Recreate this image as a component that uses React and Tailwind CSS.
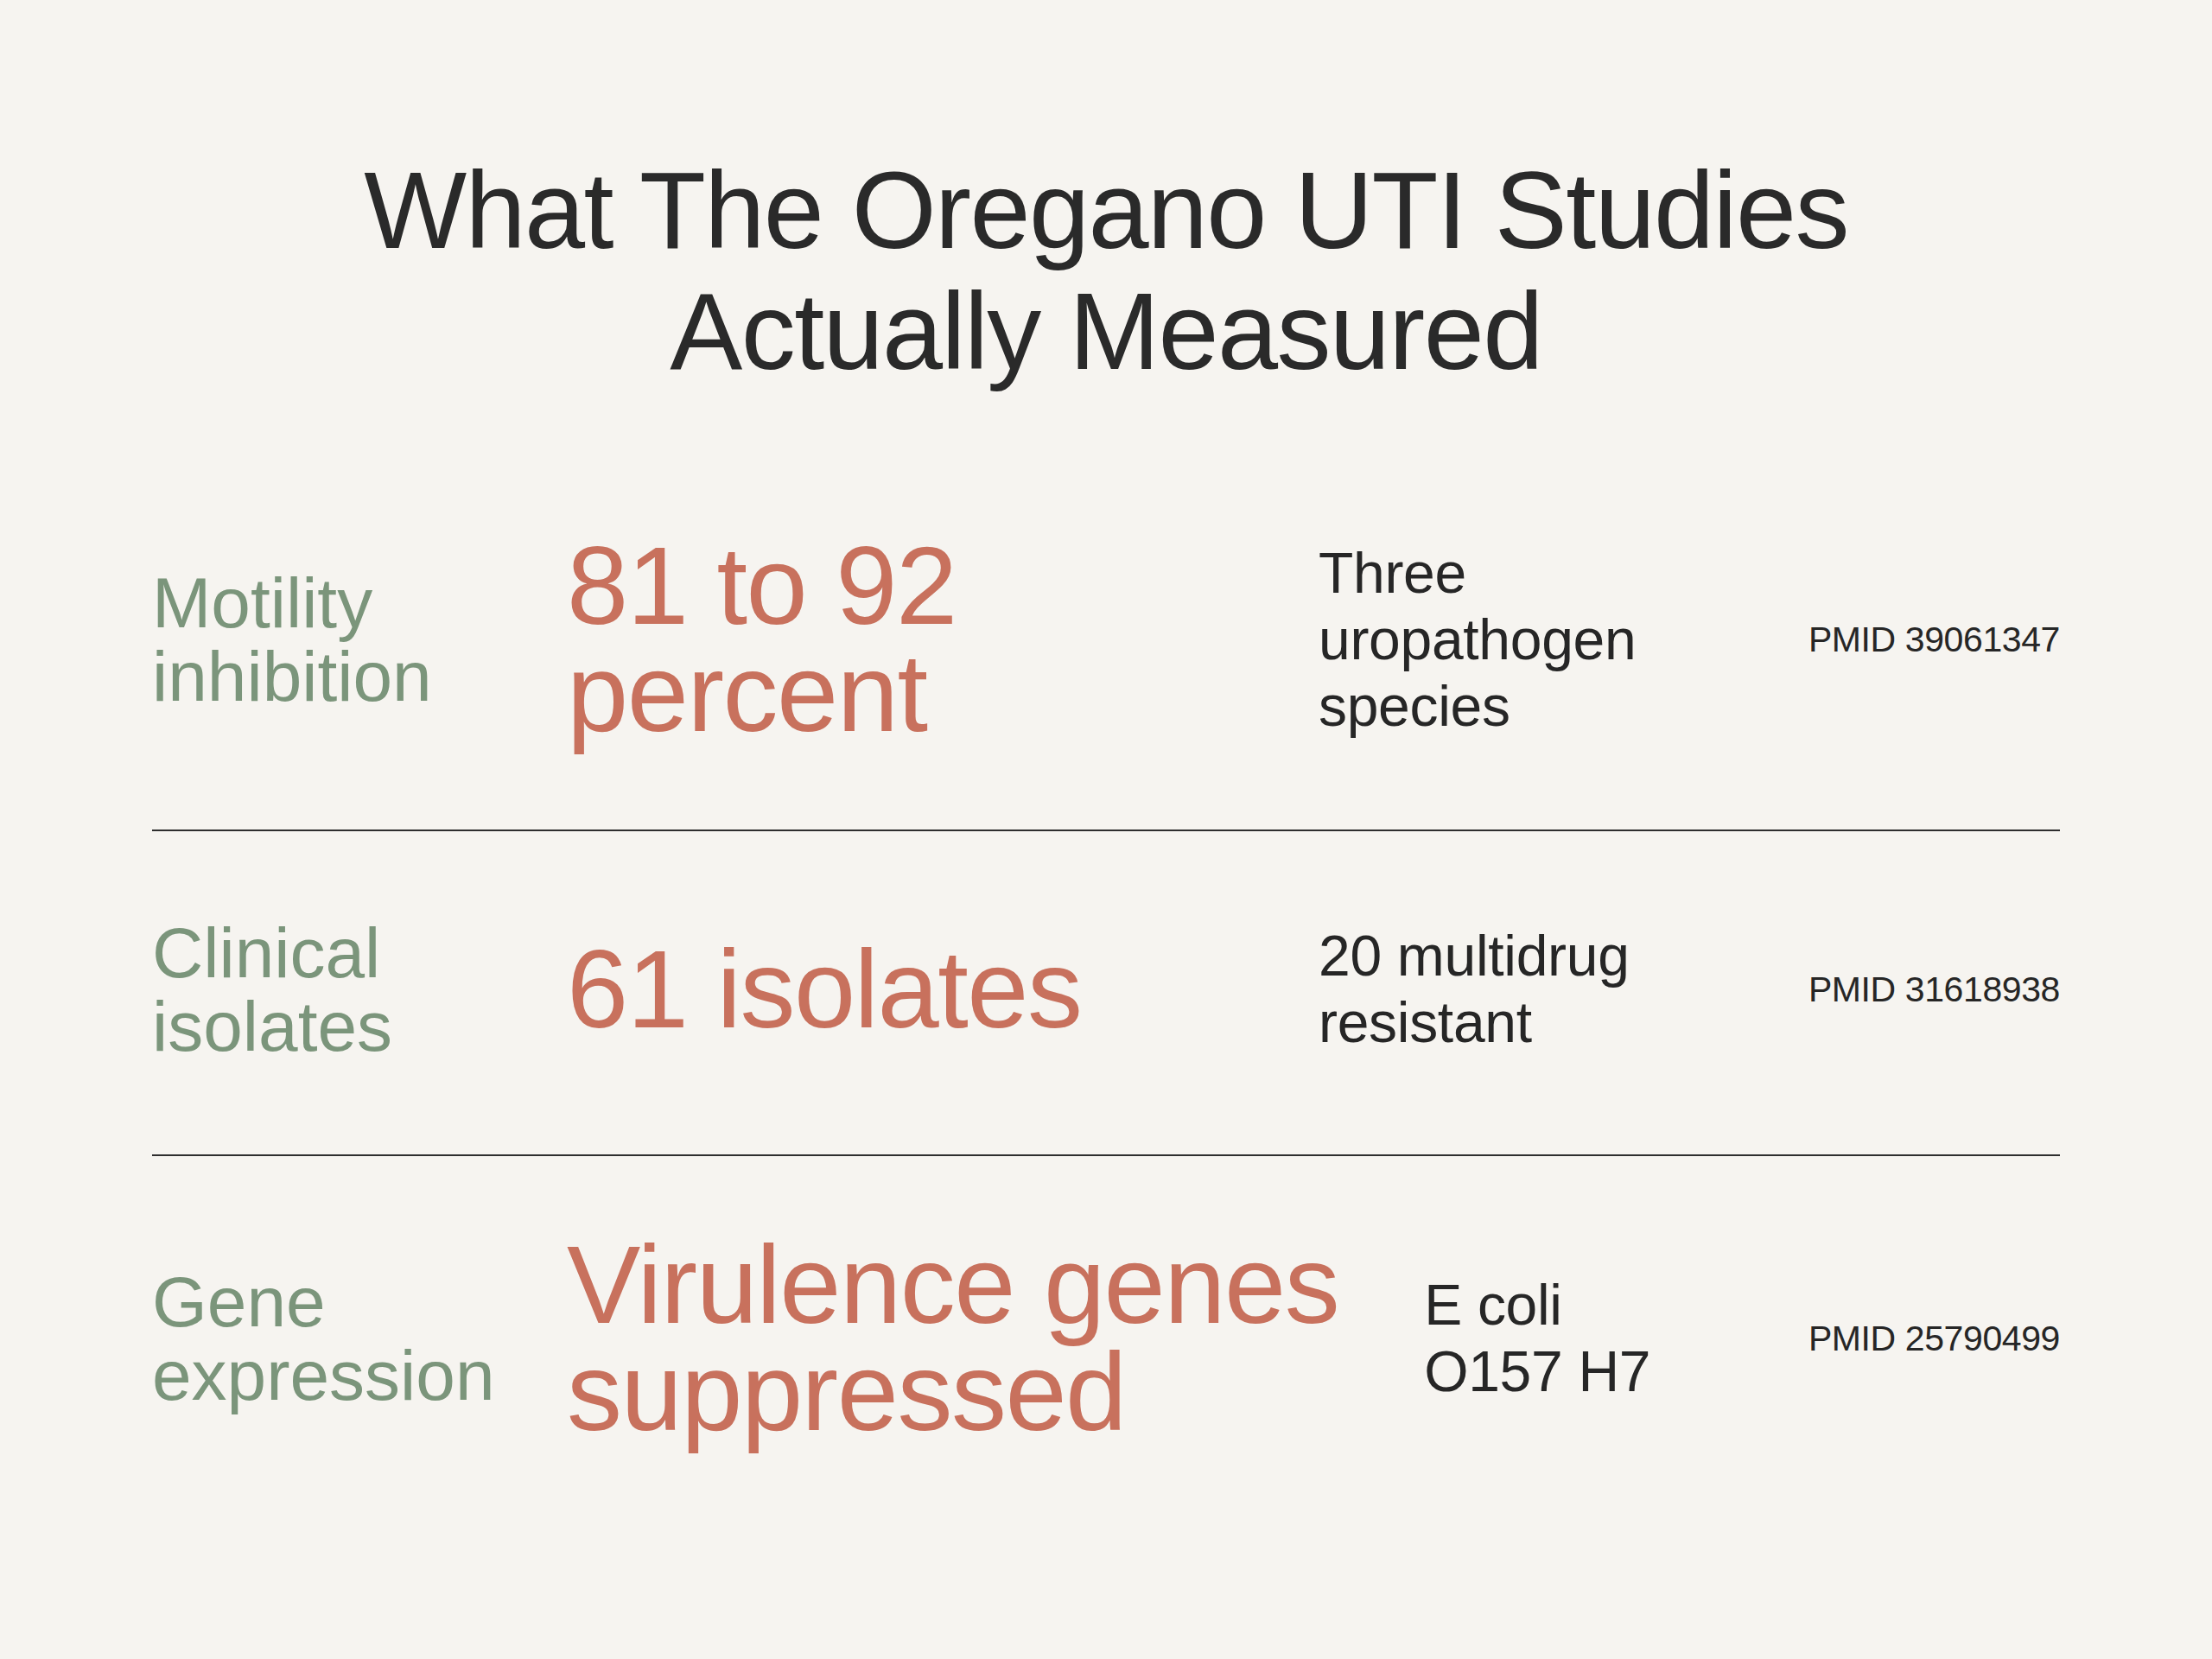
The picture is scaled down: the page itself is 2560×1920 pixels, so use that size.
import React from "react";

const rows = [
  {
    label: ["Motility", "inhibition"],
    value: ["81 to 92", "percent"],
    detail: ["Three", "uropathogen", "species"],
    pmid: "PMID 39061347",
    pad: "pt-[96px] pb-[96px]",
  },
  {
    label: ["Clinical", "isolates"],
    value: ["61 isolates"],
    detail: ["20 multidrug", "resistant"],
    pmid: "PMID 31618938",
    pad: "pt-[98px] pb-[106px]",
  },
  {
    label: ["Gene", "expression"],
    value: ["Virulence genes", "suppressed"],
    detail: ["E coli", "O157 H7"],
    pmid: "PMID 25790499",
    pad: "pt-[87px] pb-[87px]",
  },
];

function Lines({ items }) {
  return items.map((t, i) => (
    <span key={i} className="block whitespace-nowrap">
      {t}
    </span>
  ));
}

export default function App() {
  return (
    <div
      className="w-full min-h-[1920px] bg-[#f6f4f0] text-[#262626]"
      style={{ fontFamily: '"Liberation Sans", Arial, sans-serif' }}
    >
      <div className="pt-[174px] flex flex-col items-center">
        <h1 className="text-center text-[126px] leading-[140px] font-normal tracking-[-1.6px] text-[#2a2a2a]">
          <span className="block">What The Oregano UTI Studies</span>
          <span className="block">Actually Measured</span>
        </h1>
      </div>
      <div className="mt-[66px] px-[176px]">
        {rows.map((r, i) => (
          <div
            key={i}
            className={
              "flex items-center " +
              r.pad +
              (i > 0 ? " border-t-2 border-[#2e2e2e]" : "")
            }
          >
            <div className="w-[480px] shrink-0 text-[82px] leading-[85px] text-[#7b957b]">
              <Lines items={r.label} />
            </div>
            <div className="min-w-[771px] shrink-0 mr-[99px] text-[128px] leading-[124px] tracking-[-1.5px] text-[#c8715d]">
              <Lines items={r.value} />
            </div>
            <div className="flex-1 text-[66px] leading-[77px] tracking-[-0.3px] text-[#262626]">
              <Lines items={r.detail} />
            </div>
            <div className="shrink-0 text-right text-[41px] leading-[50px] tracking-[-0.4px] text-[#262626]">
              {r.pmid}
            </div>
          </div>
        ))}
      </div>
    </div>
  );
}
